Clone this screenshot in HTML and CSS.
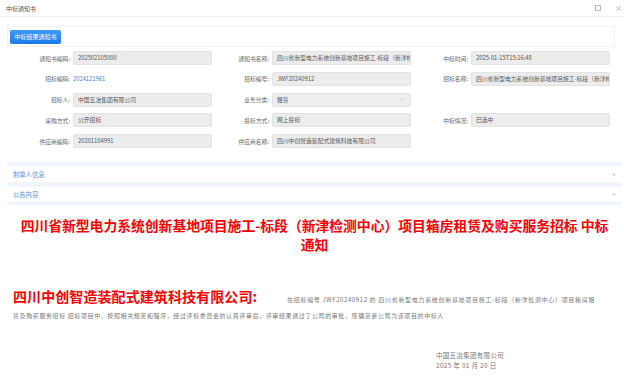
FILE: index.html
```html
<!DOCTYPE html>
<html lang="zh-CN">
<head>
    <meta charset="UTF-8">
    <meta name="viewport" content="width=device-width, initial-scale=1.0">
    <title>中标通知书</title>
    <link rel="stylesheet" href="styles.css">
</head>
<body>
    <div class="titlebar">
        <span class="win-title">中标通知书</span>
        <span class="win-btn">
            <svg width="6" height="6" viewBox="0 0 6 6"><rect x="0.5" y="0.5" width="5" height="5" fill="none" stroke="#999" stroke-width="0.7"/></svg>
        </span>
        <span class="win-btn">
            <svg width="5" height="5" viewBox="0 0 5 5"><path d="M0.5 0.5 L4.5 4.5 M4.5 0.5 L0.5 4.5" stroke="#999" stroke-width="0.7"/></svg>
        </span>
    </div>

    <div class="main">
        <div class="toolbar">
            <button class="btn-primary">中标结果通知书</button>
        </div>

        <div class="scroll">
            <div class="form">
                <div class="field"><label>通知书编码:</label><div class="input">202502105000</div></div>
                <div class="field"><label>通知书名称:</label><div class="input">四川省新型电力系统创新基地项目施工-标段（新津检测中心）项目箱房租赁及购买服务招标</div></div>
                <div class="field"><label>中标时间:</label><div class="input">2025-01-15T15:16:48</div></div>

                <div class="field"><label>招标编码:</label><a class="link">2024121961</a></div>
                <div class="field"><label>招标编号:</label><div class="input">JWF20240912</div></div>
                <div class="field"><label>招标名称:</label><div class="input">四川省新型电力系统创新基地项目施工-标段（新津检测中心）项目箱房租赁及购买服务招标</div></div>

                <div class="field"><label>招标人:</label><div class="input">中国五冶集团有限公司</div></div>
                <div class="field"><label>业务分类:</label>
                    <div class="input select">
                        <span>租赁</span>
                        <svg width="5" height="3" viewBox="0 0 5 3"><path d="M0.5 0.5 L2.5 2.5 L4.5 0.5" fill="none" stroke="#bbb" stroke-width="0.6"/></svg>
                    </div>
                </div>
                <div class="field"></div>

                <div class="field"><label>采购方式:</label><div class="input">公开招标</div></div>
                <div class="field"><label>投标方式:</label><div class="input">网上投标</div></div>
                <div class="field"><label>中标情况:</label><div class="input">已选中</div></div>

                <div class="field"><label>供应商编码:</label><div class="input">20201104991</div></div>
                <div class="field"><label>供应商名称:</label><div class="input">四川中创智造装配式建筑科技有限公司</div></div>
                <div class="field"></div>
            </div>

            <div class="collapse first">
                <span>制单人信息</span>
                <svg width="4" height="3" viewBox="0 0 4 3"><path d="M0.4 2.5 L2 0.8 L3.6 2.5" fill="none" stroke="#7aa8ea" stroke-width="0.7"/></svg>
            </div>
            <div class="collapse">
                <span>公告内容</span>
                <svg width="4" height="3" viewBox="0 0 4 3"><path d="M0.4 0.5 L2 2.2 L3.6 0.5" fill="none" stroke="#7aa8ea" stroke-width="0.7"/></svg>
            </div>

            <div class="notice">
                <h1 class="notice-title">四川省新型电力系统创新基地项目施工-标段（新津检测中心）项目箱房租赁及购买服务招标 中标通知</h1>
                <p class="notice-body"><span class="winner">四川中创智造装配式建筑科技有限公司:</span>在招标编号 JWF20240912 的 四川省新型电力系统创新基地项目施工-标段（新津检测中心）项目箱房租赁及购买服务招标 招标项目中，按照相关规定和程序，经过评标委员会的认真评审后，评审结果通过了公司的审批，现确定贵公司为该项目的中标人</p>
                <div class="sign">
                    <div>中国五冶集团有限公司</div>
                    <div>2025 年 01 月 20 日</div>
                </div>
            </div>
        </div>
    </div>
</body>
</html>
```

FILE: styles.css
```css
* {
    box-sizing: border-box;
}
body {
    margin: 0;
    height: 381px;
    overflow: hidden;
    background: #fff;
    color: #666;
    font-family: "Noto Sans CJK SC", "Noto Sans", sans-serif;
}
.titlebar {
    height: 17px;
    display: flex;
    align-items: center;
    gap: 10.5px;
    padding: 0 1px 0 6px;
    border-bottom: 1px solid #eee;
    font-size: 6px;
    color: #555;
}
.win-title {
    flex: 1;
}
.win-btn {
    width: 10px;
    display: flex;
    justify-content: center;
}
.main {
    padding: 9px 0 0 7px;
}
.toolbar {
    height: 21px;
    display: flex;
    align-items: center;
    margin-right: 9px;
    padding: 0 2px;
    border: 1px solid #f2f2f2;
}
.btn-primary {
    height: 14px;
    width: 51px;
    padding: 0;
    border: none;
    border-radius: 2px;
    background: linear-gradient(#4299fb, #1d7bf0);
    color: #fff;
    font-family: inherit;
    font-size: 6px;
}
.scroll {
    height: 334px;
    margin-right: 2px;
    overflow-y: scroll;
}
.scroll::-webkit-scrollbar {
    width: 6px;
}
.scroll::-webkit-scrollbar-track {
    background: #f7f7f9;
}
.scroll::-webkit-scrollbar-thumb {
    background: #d9dae2;
    border-radius: 3px;
}
.form {
    display: grid;
    grid-template-columns: repeat(3, 199px);
    row-gap: 6.75px;
    padding: 4px 0 14px 6px;
}
.field {
    display: grid;
    grid-template-columns: 57px 139px;
    column-gap: 3px;
    align-items: center;
    height: 14px;
    font-size: 5.8px;
}
.field label {
    text-align: right;
    color: #666;
}
.input {
    height: 14px;
    line-height: 12px;
    padding: 0 4px;
    background: #ececec;
    border: 1px solid #e3e3e3;
    border-radius: 2px;
    color: #555;
    white-space: nowrap;
    overflow: hidden;
}
.input.select {
    display: flex;
    align-items: center;
    justify-content: space-between;
    padding-right: 5px;
    background: #eeeeee;
}
.link {
    color: #4a80dd;
}
.collapse {
    height: 20px;
    display: flex;
    align-items: center;
    justify-content: space-between;
    padding: 0 6px;
    border-top: 5px solid #f1f6fc;
    font-size: 6.3px;
    color: #5a92e2;
}
.collapse.first {
    border-top-width: 4px;
}
.notice {
    border-top: 3px solid #f1f6fc;
    padding: 11px 0 95px;
}
.notice-title {
    margin: 0;
    padding: 0 7px;
    font-size: 13.8px;
    line-height: 19px;
    font-weight: bold;
    color: #ff0000;
    text-align: center;
}
.notice-body {
    margin: 34px 0 0;
    padding: 0 27px 0 6px;
    font-size: 6px;
    line-height: 16px;
    letter-spacing: 0.6px;
    text-align: justify;
    color: #777;
}
.winner {
    margin-right: 30px;
    font-size: 14px;
    font-weight: bold;
    letter-spacing: 0;
    color: #ff0000;
}
.sign {
    margin: 26px 0 0 429px;
    font-size: 6.5px;
    line-height: 10px;
    letter-spacing: 0.3px;
    color: #777;
}
```
